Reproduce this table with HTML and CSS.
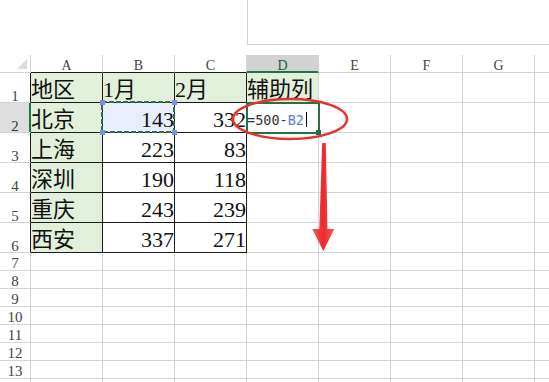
FILE: index.html
```html
<!DOCTYPE html>
<html lang="zh-CN">
<head>
<meta charset="utf-8">
<title>Sheet</title>
<link rel="stylesheet" href="styles.css">
</head>
<body>
<div class="page">
  <div class="top"><div class="namebox"></div></div>
  <table class="sheet">
    <colgroup>
      <col class="c-rh"><col class="c"><col class="c"><col class="c"><col class="c"><col class="c"><col class="c"><col class="c"><col class="c">
    </colgroup>
    <tr class="hdr">
      <th class="corner"><svg class="tri" width="10" height="10" viewBox="0 0 10 10"><polygon points="10,0 10,10 0,10" fill="#dcdcdc"/></svg></th>
      <th class="col t">A</th><th class="col t">B</th><th class="col t">C</th><th class="col sel">D</th><th class="col">E</th><th class="col">F</th><th class="col">G</th><th class="col"></th>
    </tr>
    <tr class="big">
      <th class="rh t">1</th>
      <td class="cell t g">地区</td><td class="cell t g">1月</td><td class="cell t g">2月</td><td class="cell g">辅助列</td><td></td><td></td><td></td><td></td>
    </tr>
    <tr class="big">
      <th class="rh sel">2</th>
      <td class="cell t g">北京</td>
      <td class="cell t num copy">143<svg class="ants" width="74" height="32" viewBox="0 0 74 32"><rect x="1" y="1" width="72" height="30" fill="none" stroke="#2f6b4c" stroke-width="2" stroke-dasharray="5 2"/><rect x="-1" y="-1" width="5" height="5" fill="#7393da"/><rect x="71" y="-1" width="5" height="5" fill="#7393da"/><rect x="-1" y="29" width="5" height="5" fill="#7393da"/><rect x="71" y="29" width="5" height="5" fill="#7393da"/></svg></td>
      <td class="cell t num">332</td>
      <td class="cell active"><span class="formula">=500-<span class="ref">B2</span></span><span class="caret"></span><span class="frame"></span><span class="fill"></span></td>
      <td></td><td></td><td></td><td></td>
    </tr>
    <tr class="big">
      <th class="rh t">3</th>
      <td class="cell t g">上海</td><td class="cell t num">223</td><td class="cell t num">83</td><td></td><td></td><td></td><td></td><td></td>
    </tr>
    <tr class="big">
      <th class="rh t">4</th>
      <td class="cell t g">深圳</td><td class="cell t num">190</td><td class="cell t num">118</td><td></td><td></td><td></td><td></td><td></td>
    </tr>
    <tr class="big">
      <th class="rh t">5</th>
      <td class="cell t g">重庆</td><td class="cell t num">243</td><td class="cell t num">239</td><td></td><td></td><td></td><td></td><td></td>
    </tr>
    <tr class="big">
      <th class="rh t">6</th>
      <td class="cell t g">西安</td><td class="cell t num">337</td><td class="cell t num">271</td><td></td><td></td><td></td><td></td><td></td>
    </tr>
    <tr class="small"><th class="rh">7</th><td></td><td></td><td></td><td></td><td></td><td></td><td></td><td></td></tr>
    <tr class="small"><th class="rh">8</th><td></td><td></td><td></td><td></td><td></td><td></td><td></td><td></td></tr>
    <tr class="small"><th class="rh">9</th><td></td><td></td><td></td><td></td><td></td><td></td><td></td><td></td></tr>
    <tr class="small"><th class="rh">10</th><td></td><td></td><td></td><td></td><td></td><td></td><td></td><td></td></tr>
    <tr class="small"><th class="rh">11</th><td></td><td></td><td></td><td></td><td></td><td class="gap"></td><td></td><td></td></tr>
    <tr class="small"><th class="rh">12</th><td></td><td></td><td></td><td></td><td></td><td class="gap"></td><td></td><td></td></tr>
    <tr class="small"><th class="rh">13</th><td></td><td></td><td></td><td></td><td></td><td></td><td></td><td></td></tr>
    <tr class="small"><th class="rh"></th><td></td><td></td><td></td><td></td><td></td><td></td><td></td><td></td></tr>
  </table>
  <svg class="annot" width="549" height="382" viewBox="0 0 549 382">
    <defs>
      <linearGradient id="ag" x1="0" y1="0" x2="1" y2="0">
        <stop offset="0" stop-color="#f55a5a"/>
        <stop offset="0.5" stop-color="#ec2a2a"/>
        <stop offset="1" stop-color="#f55a5a"/>
      </linearGradient>
    </defs>
    <ellipse cx="290" cy="119" rx="57" ry="20" fill="none" stroke="#e4342c" stroke-width="2.5"/>
    <polygon points="322.2,143 325.8,143 327.5,229 334.3,229 323.3,251 312.3,229 319.3,229" fill="url(#ag)"/>
  </svg>
</div>
</body>
</html>
```
FILE: styles.css
```css
* { box-sizing: border-box; }
html, body { margin: 0; padding: 0; background: #fff; }
body { width: 549px; height: 382px; overflow: hidden; }

.page { position: relative; width: 549px; height: 382px; overflow: hidden; }

.top { height: 55px; display: flex; }
.namebox {
  margin-left: 247px;
  flex: 1;
  height: 45px;
  border-left: 1px solid #d0d0d0;
  border-bottom: 1px solid #d0d0d0;
}

.sheet {
  border-collapse: separate;
  border-spacing: 0;
  table-layout: fixed;
  width: 607px;
}
col.c-rh { width: 31px; }
col.c { width: 72px; }

.sheet th, .sheet td {
  padding: 0;
  border-right: 1px solid #d4d4d4;
  border-bottom: 1px solid #d4d4d4;
  white-space: nowrap;
  overflow: visible;
  font-weight: normal;
}

tr.hdr { height: 18px; }
tr.big { height: 30px; }
tr.small { height: 18px; }

.corner { border-right-color: #d8d8d8; border-bottom-color: #c8c8c8; vertical-align: bottom; }
.tri { display: block; margin: 0 3px 3px auto; }

.col {
  font-family: "Liberation Serif", serif;
  font-size: 14px;
  line-height: 12px;
  color: #444;
  text-align: center;
  vertical-align: bottom;
  border-right-color: #dadada;
  border-bottom-color: #c8c8c8;
}
.hdr .col.t { border-bottom-color: #1a1a1a; }
.col.sel {
  background: #d3d3d3;
  color: #1f5c3c;
  border-bottom-color: #217346;
  box-shadow: inset 0 -1px 0 #217346;
}

.rh {
  font-family: "Liberation Serif", serif;
  font-size: 15px;
  color: #444;
  text-align: center;
  vertical-align: bottom;
  line-height: 13px;
}
tr.big .rh { line-height: 11px; }
.rh.t { border-right-color: #1a1a1a; }
.rh.sel {
  background: #dedede;
  color: #333;
  border-right-color: #217346;
  box-shadow: inset -1px 0 0 #217346;
}

.cell {
  font-family: "Liberation Serif", "Noto Sans CJK SC", serif;
  font-size: 22px;
  font-weight: 300;
  line-height: 24px;
  color: #111;
  vertical-align: bottom;
  padding: 0 3px;
}
.cell.t { border-right-color: #1a1a1a; border-bottom-color: #1a1a1a; }
.cell.g { background: #e2efda; }
.cell.num { text-align: right; font-weight: normal; }

.copy { position: relative; background: #e8eefb; }
.ants { position: absolute; left: -2px; top: -2px; overflow: visible; }

.active {
  position: relative;
  vertical-align: middle;
  padding: 0 0 0 1px;
}
.formula {
  font-family: "DejaVu Sans Mono", monospace;
  font-size: 13.5px;
  line-height: 16px;
  color: #333;
  vertical-align: middle;
}
.ref { color: #5b80d2; }
.caret {
  display: inline-block;
  width: 1px;
  height: 15px;
  background: #000;
  margin-left: 2px;
  vertical-align: middle;
}
.frame {
  position: absolute;
  left: -1px;
  top: -1px;
  right: -2px;
  bottom: -2px;
  border: 2px solid #217346;
}
.fill {
  position: absolute;
  right: -3px;
  bottom: -3px;
  width: 5px;
  height: 5px;
  background: #217346;
}

.gap { border-right-color: transparent; }

.annot { position: absolute; left: 0; top: 0; pointer-events: none; }
```
